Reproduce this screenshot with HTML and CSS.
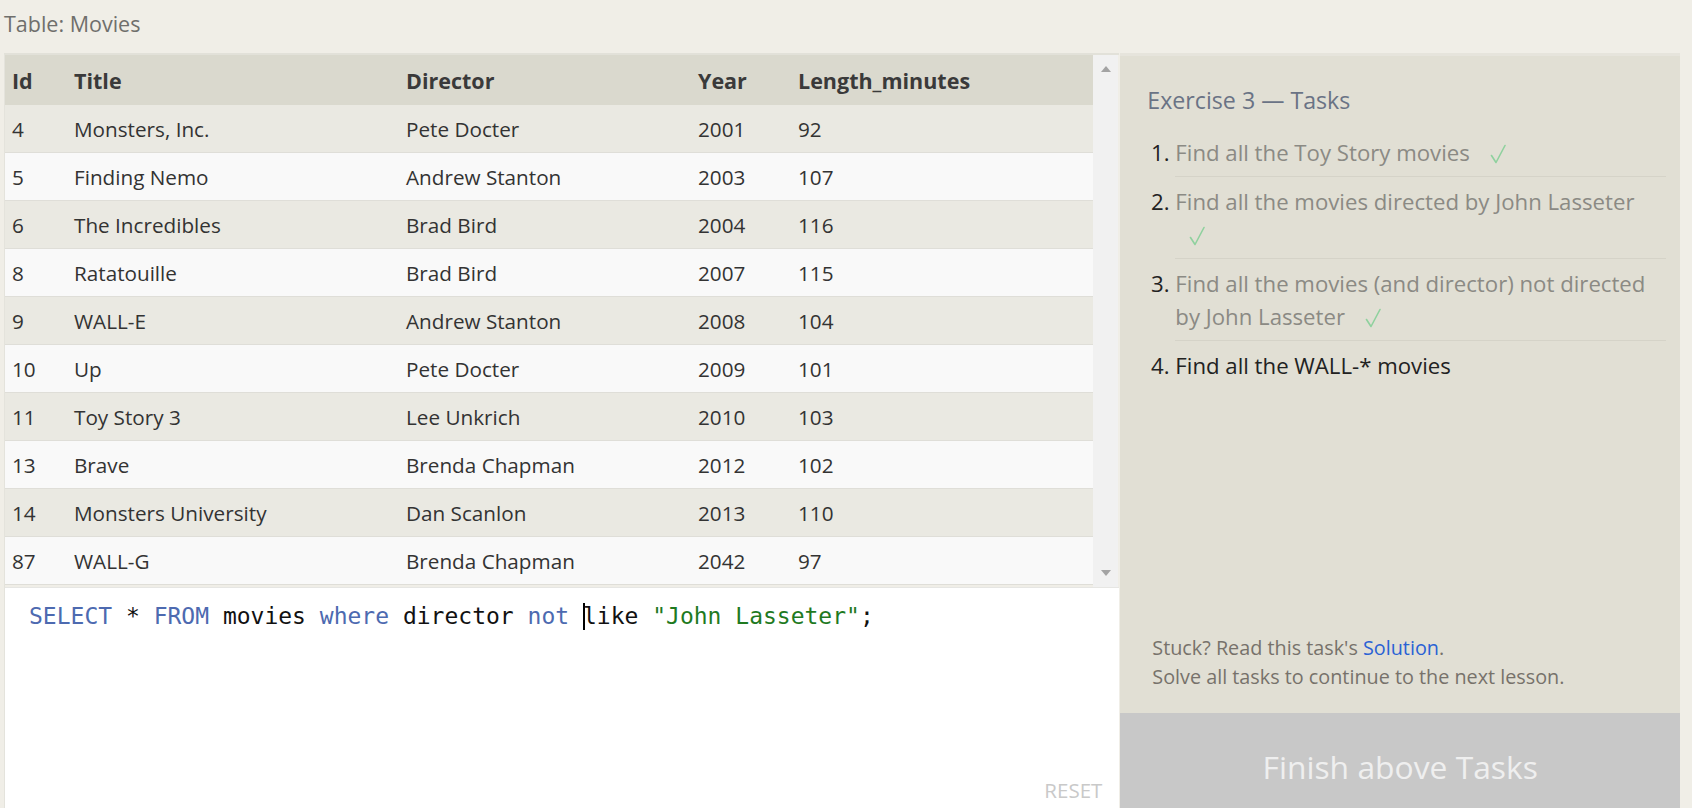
FILE: index.html
```html
<!DOCTYPE html>
<html lang="en">
<head>
<meta charset="utf-8">
<title>SQL Lesson - Exercise 3</title>
<link rel="stylesheet" href="styles.css">
</head>
<body>
<div class="page">
  <div class="caption">Table: Movies</div>
  <div class="main">
    <div class="left">
      <div class="results">
        <div class="table-wrap">
          <table class="grid">
            <colgroup>
              <col class="c-id"><col class="c-title"><col class="c-dir"><col class="c-year"><col>
            </colgroup>
            <thead>
              <tr><th>Id</th><th>Title</th><th>Director</th><th>Year</th><th>Length_minutes</th></tr>
            </thead>
            <tbody>
              <tr><td>4</td><td>Monsters, Inc.</td><td>Pete Docter</td><td>2001</td><td>92</td></tr>
              <tr><td>5</td><td>Finding Nemo</td><td>Andrew Stanton</td><td>2003</td><td>107</td></tr>
              <tr><td>6</td><td>The Incredibles</td><td>Brad Bird</td><td>2004</td><td>116</td></tr>
              <tr><td>8</td><td>Ratatouille</td><td>Brad Bird</td><td>2007</td><td>115</td></tr>
              <tr><td>9</td><td>WALL-E</td><td>Andrew Stanton</td><td>2008</td><td>104</td></tr>
              <tr><td>10</td><td>Up</td><td>Pete Docter</td><td>2009</td><td>101</td></tr>
              <tr><td>11</td><td>Toy Story 3</td><td>Lee Unkrich</td><td>2010</td><td>103</td></tr>
              <tr><td>13</td><td>Brave</td><td>Brenda Chapman</td><td>2012</td><td>102</td></tr>
              <tr><td>14</td><td>Monsters University</td><td>Dan Scanlon</td><td>2013</td><td>110</td></tr>
              <tr><td>87</td><td>WALL-G</td><td>Brenda Chapman</td><td>2042</td><td>97</td></tr>
            </tbody>
          </table>
        </div>
        <div class="scrollbar">
          <span class="arrow up"></span>
          <span class="arrow down"></span>
        </div>
      </div>
      <div class="editor">
        <div class="code"><span class="kw">SELECT</span> * <span class="kw">FROM</span> movies <span class="kw">where</span> director <span class="kw">not</span> <span class="caret"></span>like <span class="str">"John Lasseter"</span>;</div>
        <div class="reset">RESET</div>
      </div>
    </div>
    <div class="right">
      <div class="tasks">
        <h2 class="tasks-title">Exercise 3 — Tasks</h2>
        <ol class="task-list">
          <li class="done"><span class="t">Find all the Toy Story movies</span> <svg class="check" viewBox="0 0 16 20" width="16" height="20"><path d="M1.5 11.5 L6 18.5 L15 1.5"/></svg></li>
          <li class="done"><span class="t">Find all the movies directed by John Lasseter</span> <svg class="check" viewBox="0 0 16 20" width="16" height="20"><path d="M1.5 11.5 L6 18.5 L15 1.5"/></svg></li>
          <li class="done"><span class="t">Find all the movies (and director) not directed by John Lasseter</span> <svg class="check" viewBox="0 0 16 20" width="16" height="20"><path d="M1.5 11.5 L6 18.5 L15 1.5"/></svg></li>
          <li class="todo"><span class="t">Find all the WALL-* movies</span></li>
        </ol>
      </div>
      <div class="help">
        <p>Stuck? Read this task's <a href="#" class="link">Solution</a>.</p>
        <p>Solve all tasks to continue to the next lesson.</p>
      </div>
      <div class="finish">Finish above Tasks</div>
    </div>
  </div>
</div>
</body>
</html>
```
FILE: styles.css
```css
html, body {
  margin: 0;
  padding: 0;
  height: 808px;
  overflow: hidden;
}
body {
  background: #f0eee7;
  font-family: "Open Sans", "Noto Sans", sans-serif;
  color: #333;
}
.page {
  display: flex;
  flex-direction: column;
  height: 808px;
}
.caption {
  height: 53px;
  padding-left: 4px;
  font-size: 21.5px;
  line-height: 48px;
  color: #6f6f6c;
}
.main {
  flex: 1;
  display: flex;
  min-height: 0;
  padding-left: 4px;
  padding-right: 12px;
}
.left {
  width: 1115px;
  display: flex;
  flex-direction: column;
  border-top: 2px solid #e2e1d9;
  border-left: 1px solid #e4e3dc;
}
.results {
  height: 532px;
  display: flex;
}
.table-wrap {
  flex: 1;
  overflow: hidden;
}
.grid {
  width: 100%;
  border-collapse: collapse;
  table-layout: fixed;
  font-size: 20.7px;
}
.c-id { width: 62px; }
.c-title { width: 332px; }
.c-dir { width: 292px; }
.c-year { width: 100px; }
.grid th {
  background: #dad9ce;
  height: 50px;
  padding: 0 0 0 7px;
  text-align: left;
  font-weight: 700;
  font-size: 21.5px;
  color: #3a3a3a;
}
.grid td {
  height: 47px;
  padding: 0 0 0 7px;
  border-bottom: 1px solid #dfded8;
  color: #333;
  white-space: nowrap;
}
.grid tbody tr:nth-child(odd) td { background: #eae9e2; }
.grid tbody tr:nth-child(even) td { background: #f9f9f9; }
.scrollbar {
  width: 25px;
  background: #f1f1f1;
  display: flex;
  flex-direction: column;
  justify-content: space-between;
  align-items: center;
  padding: 11px 0 11px;
  border-right: 1px solid #f0eee7;
}
.arrow {
  width: 0;
  height: 0;
  border-left: 5px solid transparent;
  border-right: 5px solid transparent;
}
.arrow.up { border-bottom: 6px solid #a3a3a3; }
.arrow.down { border-top: 6px solid #a3a3a3; }
.editor {
  flex: 1;
  background: #fff;
  display: flex;
  flex-direction: column;
  padding: 13px 17px 4px 24px;
  border-top: 1px solid #e6e6e3;
}
.code {
  font-family: "DejaVu Sans Mono", "Liberation Mono", monospace;
  font-size: 23px;
  line-height: 30px;
  color: #111;
  white-space: pre;
}
.kw { color: #4d6ab0; }
.str { color: #1f7a1f; }
.caret {
  display: inline-block;
  width: 2px;
  height: 27px;
  background: #000;
  margin-right: -2px;
  vertical-align: -6px;
}
.reset {
  margin-top: auto;
  align-self: flex-end;
  font-size: 20.5px;
  color: #c9c9c9;
}
.right {
  width: 560px;
  margin-left: 1px;
  background: #e1dfd4;
  border-top: 3px solid #e6e4dc;
  display: flex;
  flex-direction: column;
}
.tasks {
  padding: 27px 14px 0 27px;
}
.tasks-title {
  margin: 0 0 11px;
  font-weight: 400;
  font-size: 23.2px;
  line-height: 34px;
  color: #6a7385;
}
.task-list {
  margin: 0;
  padding-left: 28px;
  font-size: 22.2px;
  line-height: 33px;
}
.task-list li {
  padding: 8px 0 7px;
  border-bottom: 1px solid #d5d3c8;
  color: #222;
}
.task-list li:last-child { border-bottom: none; }
.task-list li::marker { color: #222; }
.task-list li.done .t { color: #8b8a84; }
.check {
  margin-left: 14px;
  vertical-align: -3px;
  fill: none;
  stroke: #8fd19e;
  stroke-width: 1.6;
  stroke-linecap: round;
  stroke-linejoin: round;
}
.help {
  margin-top: auto;
  padding: 0 20px 22px 32px;
  font-size: 19.8px;
  line-height: 29px;
  color: #77726b;
}
.help p { margin: 0; }
.link { color: #2a62d4; text-decoration: none; }
.finish {
  height: 95px;
  background: #c8c8c8;
  color: #efefef;
  font-size: 31.8px;
  text-align: center;
  line-height: 108px;
}
```
